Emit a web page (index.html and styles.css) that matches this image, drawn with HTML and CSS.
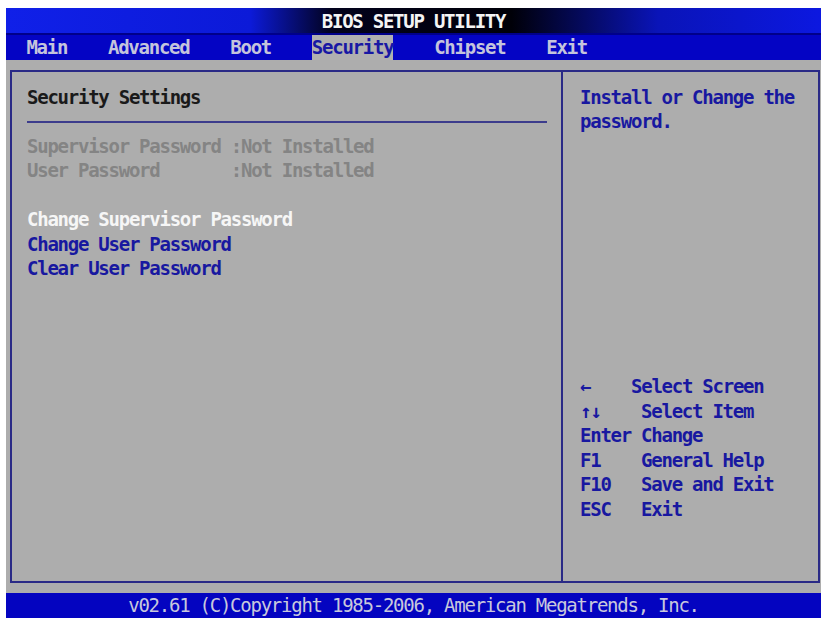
FILE: index.html
```html
<!DOCTYPE html>
<html lang="en">
<head>
    <meta charset="UTF-8">
    <meta name="viewport" content="width=device-width, initial-scale=1.0">
    <title>BIOS Setup Utility</title>
    <link rel="stylesheet" href="styles.css">
</head>
<body>

<div class="screen">
    <div class="title-bar">BIOS SETUP UTILITY</div>
    <div class="tabs">
        <span class="tab">Main</span>
        <span class="tab">Advanced</span>
        <span class="tab">Boot</span>
        <span class="tab active">Security</span>
        <span class="tab">Chipset</span>
        <span class="tab">Exit</span>
    </div>

    <div class="main">
        <div class="panel">
            <div class="settings">
                <div class="heading">Security Settings</div>
                <div class="rule"></div>
                <div class="status"><span class="label">Supervisor Password</span>:Not Installed</div>
                <div class="status"><span class="label">User Password</span>:Not Installed</div>
                <div class="blank"></div>
                <div class="option selected">Change Supervisor Password</div>
                <div class="option">Change User Password</div>
                <div class="option">Clear User Password</div>
            </div>
            <div class="help">
                <div class="help-text">Install or Change the<br>password.</div>
                <div class="keys">
                    <div><span class="key short">&larr;</span>Select Screen</div>
                    <div><span class="key">&uarr;&darr;</span>Select Item</div>
                    <div><span class="key">Enter</span>Change</div>
                    <div><span class="key">F1</span>General Help</div>
                    <div><span class="key">F10</span>Save and Exit</div>
                    <div><span class="key">ESC</span>Exit</div>
                </div>
            </div>
        </div>
    </div>

    <div class="footer">v02.61 (C)Copyright 1985-2006, American Megatrends, Inc.</div>
</div>

</body>
</html>
```

FILE: styles.css
```css
body {
    margin: 0;
    background-color: #fff;
    font-family: "DejaVu Sans Mono", "Liberation Mono", monospace;
    font-size: 19px;
    font-weight: bold;
    letter-spacing: -1.25px;
    line-height: 24.5px;
}
.screen {
    width: 815px;
    margin: 8px 0 0 6px;
}
.title-bar {
    height: 27px;
    line-height: 27px;
    text-align: center;
    color: #f4f4f4;
    background: linear-gradient(to right, #1020e8 0%, #0c1ad8 30%, #02021c 40%, #000008 62%, #0a14b8 80%, #0c18e0 100%);
    border-bottom: 2px solid #00008a;
    box-sizing: border-box;
}
.tabs {
    display: flex;
    gap: 40.8px;
    height: 25px;
    line-height: 25px;
    padding-left: 20.4px;
    background-color: #0404c4;
    color: #c4c4dc;
}
.tab.active {
    background-color: #b0b0b0;
    color: #1818a4;
}
.main {
    background-color: #adadad;
    padding: 10px 1px 10px 4px;
}
.panel {
    display: flex;
    height: 509px;
    border: 2px solid #2a2a86;
}
.settings {
    width: 551px;
    padding: 12.75px 14px 0 15px;
    border-right: 2px solid #2a2a86;
    box-sizing: border-box;
}
.heading {
    color: #1a1a1a;
}
.rule {
    height: 24.5px;
    background: linear-gradient(#3c3c8c, #3c3c8c) no-repeat 0 11.5px / 100% 2px;
}
.status {
    color: #848484;
}
.status .label {
    display: inline-block;
    width: 203.8px;
}
.blank {
    height: 24.5px;
}
.option {
    color: #1818a0;
}
.option.selected {
    color: #f6f6f6;
}
.help {
    flex: 1;
    display: flex;
    flex-direction: column;
    justify-content: space-between;
    padding: 12.75px 0 60px 17px;
    color: #1818a0;
}
.key {
    display: inline-block;
    width: 61.1px;
}
.key.short {
    width: 51px;
}
.footer {
    height: 25px;
    line-height: 25px;
    text-align: center;
    background-color: #0404c0;
    color: #c8c8dc;
    font-weight: normal;
}
```
